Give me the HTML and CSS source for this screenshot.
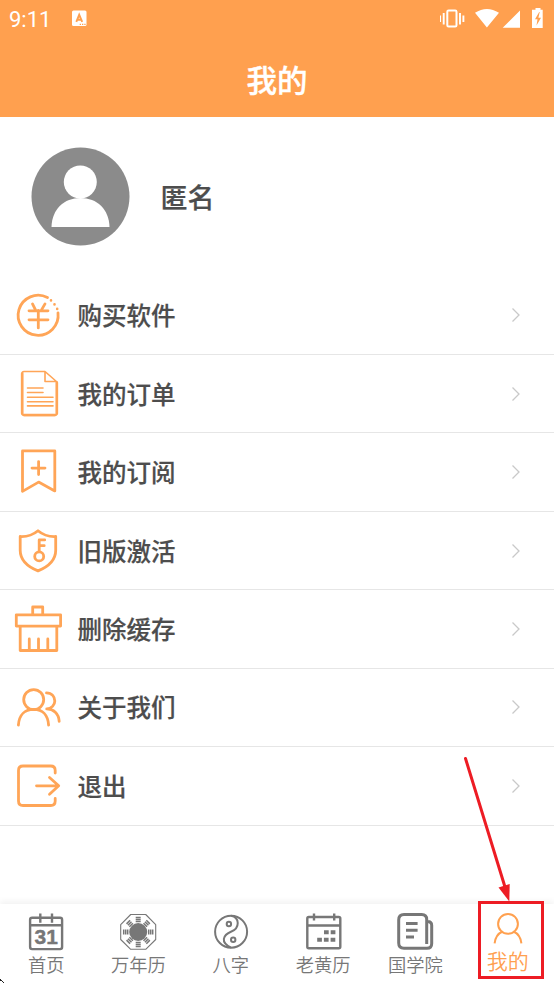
FILE: index.html
```html
<!DOCTYPE html>
<html lang="zh-CN">
<head>
<meta charset="utf-8">
<title>我的</title>
<link rel="stylesheet" href="styles.css">
</head>
<body>
<div class="app">
  <header class="header">
    <div class="status">
      <span class="time">9:11</span>
      <svg class="input-icon" width="15" height="16" viewBox="72 10 15 16"><rect x="72" y="10.5" width="14.5" height="15.5" rx="1.5" fill="#fff"/><path d="M76.3 21.8 79.2 14.8 82.2 21.8M77.4 19.8h3.6" fill="none" stroke="#ffa04f" stroke-width="1.9"/><path d="M79.7 24.4h1.3m1 0h1.3m1 0h1.3" stroke="#ffa04f" stroke-width="1.2"/></svg>
      <svg class="system-icons" width="114" height="38" viewBox="440 0 114 38">
        <rect x="447.3" y="10.5" width="9.2" height="16" rx="1.3" fill="none" stroke="#fff" stroke-width="2"/>
        <path d="M440.1 15.5v6.5M443.7 13v11.5M460 13v11.5M463.4 15.5v6.5" stroke="#fff" stroke-width="1.9"/>
        <path d="M475 12.8Q486.9 5 499 12.8L486.9 27.5ZM520 10.5V27.8H502.7Z" fill="#fff"/>
        <path d="M535.5 8h5v1.8h2.2V28H532V9.8h3.5Z" fill="#fff"/><path d="m539.2 12-4.2 7.3h2.5l-1 6.2 4.5-7.8h-2.6l1.3-5.7Z" fill="#ffa04f"/>
      </svg>
    </div>
    <h1 class="title">我的</h1>
  </header>

  <section class="profile">
    <svg class="avatar" width="99" height="99" viewBox="0 0 99 99"><circle cx="49.5" cy="49.5" r="49" fill="#8b8b8b"/><circle cx="49.3" cy="35" r="16.5" fill="#fff"/><path d="M20.5 80C21 62 33 51 49.5 51S78 62 78.5 80Z" fill="#fff"/></svg>
    <span class="name">匿名</span>
  </section>

  <nav class="menu">
    <a class="row"><svg class="row-icon" viewBox="0 276.6 64 78"><path d="M47.5 297.2A20 20 0 1 0 58 312.5"/><path d="m32.5 303.5 3 6m9.5-6-3.5 6m-12.5.9h19m-19 9h19M38.3 310v17.5"/><path class="dots" d="M51 300v.1M54.5 303.9v.1M57.2 308.5v.1"/></svg><span class="label">购买软件</span><svg class="chevron" viewBox="0 0 10 16"><path d="m1.5 1.5 6.5 6.5-6.5 6.5"/></svg></a>
    <a class="row"><svg class="row-icon" viewBox="0 355 64 78"><path class="thin" d="M44.5 371.5H24Q22 371.5 22 374V413.5Q22 415.5 24.5 415.5H54.5Q57 415.5 57 413.5V382L45 371.5V381.5H56"/><path class="side" d="M22.2 373.5v40M56.8 382.5v31M24 415h31"/><path class="fine" d="M27.5 388h15.5m-15.5 4.5H43m-15.5 4.8H53m-25.5 4.5H53m-25.5 4.1H53"/></svg><span class="label">我的订单</span><svg class="chevron" viewBox="0 0 10 16"><path d="m1.5 1.5 6.5 6.5-6.5 6.5"/></svg></a>
    <a class="row"><svg class="row-icon" viewBox="0 433.4 64 78"><path d="M22.5 451.3h32.3v40L38.6 482.5 22.5 491.8ZM32 468.5h13M38.6 462v13"/></svg><span class="label">我的订阅</span><svg class="chevron" viewBox="0 0 10 16"><path d="m1.5 1.5 6.5 6.5-6.5 6.5"/></svg></a>
    <a class="row"><svg class="row-icon" viewBox="0 511.8 64 78"><path d="M38 530.5C33 534.7 26.5 536.6 20.2 536.3V550C20.2 561 29 567 38 570.7C47 567 55.7 561 55.7 550V536.3C49.5 536.6 43 534.7 38 530.5Z"/><circle cx="39.2" cy="556.2" r="4.5"/><path d="M39.2 551v-11.3h5.5M39.2 545.5h5"/></svg><span class="label">旧版激活</span><svg class="chevron" viewBox="0 0 10 16"><path d="m1.5 1.5 6.5 6.5-6.5 6.5"/></svg></a>
    <a class="row"><svg class="row-icon" viewBox="0 590.2 64 78"><rect x="16.3" y="615" width="44.3" height="11.3"/><path d="M32.7 614.5v-7.3h10v7.3M20.2 626.5v24.2h36.6v-24.2M29.3 650v-10.8M38.5 650v-10.8M47.8 650v-10.8"/></svg><span class="label">删除缓存</span><svg class="chevron" viewBox="0 0 10 16"><path d="m1.5 1.5 6.5 6.5-6.5 6.5"/></svg></a>
    <a class="row"><svg class="row-icon" viewBox="0 668.6 64 78"><circle cx="33.7" cy="699.2" r="10"/><path d="M18.4 724.8C19 714.5 25 709 33.7 709S48 714.5 48.6 724.8M46.5 692.5C52 692.5 54.8 696.5 54.8 700.5S51.5 708.5 46.7 708.5C53.5 708.5 58.8 713 59.2 721"/></svg><span class="label">关于我们</span><svg class="chevron" viewBox="0 0 10 16"><path d="m1.5 1.5 6.5 6.5-6.5 6.5"/></svg></a>
    <a class="row"><svg class="row-icon" viewBox="0 747 64 78"><path d="M55.2 773v-2.5Q55.2 766 50.7 766H23Q18.5 766 18.5 770.5V801Q18.5 805.5 23 805.5H50.7Q55.2 805.5 55.2 801V798.5M36.5 785.8h22m-9-8.3 9.2 8.3-9.2 8.5"/></svg><span class="label">退出</span><svg class="chevron" viewBox="0 0 10 16"><path d="m1.5 1.5 6.5 6.5-6.5 6.5"/></svg></a>
  </nav>

  <footer class="tabs">
    <a class="tab"><svg class="tab-icon" viewBox="26 910 40 42"><rect class="frame" x="30.1" y="917.8" width="32" height="31.3" rx="2"/><path class="frame" d="M30 925.3h32M40.3 913.5v9.3M52 913.5v9.3"/><text class="day" x="46.3" y="944" text-anchor="middle">31</text></svg><span>首页</span></a>
    <a class="tab"><svg class="tab-icon" viewBox="118.3 910 40 42"><path class="hair" d="M131 914.5h15l10 10.2v14.8l-10 9.8h-15l-10-9.8v-14.8Z"/><circle cx="138.5" cy="932" r="9" class="solid"/><path class="trigram" d="M136 917.5h5m-5 2h5m-5 2h5m-5 21h5m-5 2h5m-5 2h5M124 929.5v5m2-5v5m2-5v5m21-5v5m2-5v5m2-5v5"/><path class="trigram" transform="rotate(45 138.5 932)" d="M136 918h5m-5 2h5m-5 2h5m-5 20h5m-5 2h5m-5 2h5M124.5 929.5v5m2-5v5m2-5v5m20-5v5m2-5v5m2-5v5"/></svg><span>万年历</span></a>
    <a class="tab"><svg class="tab-icon thin-tab" viewBox="210.6 910 40 42"><circle cx="230.7" cy="931.7" r="16"/><path d="M230.7 915.7C239.5 917.5 239.5 928 231 931.5S219.5 942.5 230.7 947.7"/><circle cx="228.5" cy="924" r="2.2"/><circle cx="232.8" cy="939.8" r="2.2"/></svg><span>八字</span></a>
    <a class="tab"><svg class="tab-icon" viewBox="303 910 40 42"><rect class="frame" x="307.3" y="917" width="33" height="31.3" rx="1.5"/><path class="frame" d="M307 925.5h33M314 913.5v7M334.2 913.5v7"/><path class="blocks" d="M324 932.3h4.7m2 0h4.7M317.2 939.8h4.7m2 0h4.7m2 0h4.7"/></svg><span>老黄历</span></a>
    <a class="tab"><svg class="tab-icon" viewBox="395.3 910 40 42"><path d="M427 944V919.5Q427 914.5 422 914.5H404.3Q399 914.5 399 920V943Q399 948.3 404.3 948.3H427.3Q432 948.3 432 943.5V925.5Q432 921.5 428 921.5M406.3 923.5h11.6M406.3 930.3h11.6M406.3 937h8"/></svg><span>国学院</span></a>
    <a class="tab active"><svg class="tab-icon" viewBox="488 910 40 42"><circle cx="508" cy="923.9" r="9.9"/><path d="M494.6 943.3C495.3 937.5 498 933.5 502.5 931.5M513.5 931.5C518 933.5 520.7 937.5 521.4 943.3"/></svg><span>我的</span></a>
  </footer>

  <svg class="annotation" width="100" height="240" viewBox="454 744 100 240"><path d="M465.5 758.5 505 887" stroke="#ed1c24" stroke-width="3" stroke-linecap="round"/><path d="m498.5 887.5 11.2-3.5-.4 17.5Z" fill="#ed1c24"/><rect x="479.5" y="902.5" width="63" height="75" fill="none" stroke="#ed1c24" stroke-width="3"/></svg>
  <svg class="cursor" width="5" height="5" viewBox="0 0 5 5"><path d="M0 0h1v1h1v1H0ZM2 2h1v1H2ZM3 3h1v1H3Z" fill="#222"/></svg>
</div>
</body>
</html>
```
FILE: styles.css
```css
* { box-sizing: border-box; }
body { margin: 0; background: #fff; color: #4d4d4d; font-family: "Noto Sans CJK SC", sans-serif; }
.app { position: relative; height: 984px; display: flex; flex-direction: column; overflow: hidden; }
svg { display: block; flex: none; }
.header { height: 117px; flex: none; background: #ffa04f; color: #fff; }
.status { height: 38px; display: flex; align-items: center; padding-left: 9px; }
.time { width: 63px; font: 400 22px/38px Roboto, sans-serif; padding-top: 1px; }
.input-icon { margin-bottom: 2px; }
.system-icons { margin-left: auto; }
.title { margin: 0; text-align: center; font-size: 30.5px; line-height: 44px; padding-top: 19px; font-weight: 500; -webkit-text-stroke: 0.4px; }
.profile { height: 159.6px; flex: none; display: flex; align-items: center; padding-left: 30.5px; gap: 31px; }
.name { font-size: 27px; font-weight: 500; padding-bottom: 1px; -webkit-text-stroke: 0.2px; }
.menu { flex: none; }
.row { height: 78.43px; display: flex; align-items: center; border-bottom: 1.5px solid #e6e6e6; padding-right: 33px; }
.row-icon { width: 64px; height: 78px; fill: none; stroke: #ffa557; stroke-width: 2.8; stroke-linecap: round; stroke-linejoin: round; align-self: flex-start; }
.row-icon .thin { stroke-width: 1.6; }
.row-icon .side { stroke-width: 2.7; }
.row-icon .fine { stroke-width: 1.6; }
.row-icon .dots { stroke-width: 2.6; }
.label { flex: 1; margin-left: 13.5px; font-size: 24.5px; line-height: 36px; font-weight: 500; -webkit-text-stroke: 0.2px; }
.chevron { width: 10px; height: 16px; fill: none; stroke: #c9c9c9; stroke-width: 1.3; }
.tabs { position: relative; height: 80px; flex: none; margin-top: auto; display: grid; grid-template-columns: repeat(6, 1fr); box-shadow: 0 -3px 6px #0000000d; background: #fff; color: #777; }
.tab { display: flex; flex-direction: column; align-items: center; padding-top: 6px; font-size: 18.3px; line-height: 24px; font-weight: 350; }
.tab-icon { width: 40px; height: 42px; fill: none; stroke: #777; stroke-width: 3; stroke-linecap: butt; stroke-linejoin: round; }
.tab-icon .frame { stroke-width: 2.4; }
.thin-tab { stroke-width: 2; }
.tab-icon .hair { stroke-width: 1.1; }
.tab-icon .solid { fill: #777; stroke: none; }
.tab-icon .trigram { stroke-width: 1.5; }
.tab-icon .blocks { stroke-width: 4; }
.day { font: 700 21px "Liberation Sans", sans-serif; fill: #777; stroke: #777; stroke-width: 0.4; }
.active { color: #ffa04f; font-size: 21px; line-height: 17px; }
.active .tab-icon { stroke: #ffa04f; stroke-width: 2; }
.annotation { position: absolute; right: 0; bottom: 0; }
.cursor { position: absolute; left: 0; bottom: 0; }
```
